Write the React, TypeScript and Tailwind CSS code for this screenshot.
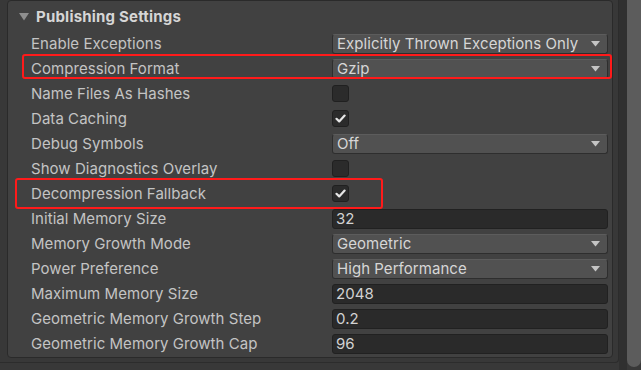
import React from "react";

type Row =
  | { label: string; kind: "dropdown"; value: string }
  | { label: string; kind: "check"; checked: boolean }
  | { label: string; kind: "text"; value: string };

const rows: Row[] = [
  { label: "Enable Exceptions", kind: "dropdown", value: "Explicitly Thrown Exceptions Only" },
  { label: "Compression Format", kind: "dropdown", value: "Gzip" },
  { label: "Name Files As Hashes", kind: "check", checked: false },
  { label: "Data Caching", kind: "check", checked: true },
  { label: "Debug Symbols", kind: "dropdown", value: "Off" },
  { label: "Show Diagnostics Overlay", kind: "check", checked: false },
  { label: "Decompression Fallback", kind: "check", checked: true },
  { label: "Initial Memory Size", kind: "text", value: "32" },
  { label: "Memory Growth Mode", kind: "dropdown", value: "Geometric" },
  { label: "Power Preference", kind: "dropdown", value: "High Performance" },
  { label: "Maximum Memory Size", kind: "text", value: "2048" },
  { label: "Geometric Memory Growth Step", kind: "text", value: "0.2" },
  { label: "Geometric Memory Growth Cap", kind: "text", value: "96" },
];

function Arrow() {
  return (
    <svg width="9" height="6" viewBox="0 0 9 6" className="shrink-0">
      <path d="M0 0 L9 0 L4.5 5.5 Z" fill="#c4c4c4" />
    </svg>
  );
}

function Field({ row }: { row: Row }) {
  if (row.kind === "dropdown") {
    return (
      <div className="w-[276px] h-[20px] rounded-[3px] bg-[#515151] border border-[#2e2e2e] border-t-[#5c5c5c] flex items-center pl-[4px] pr-[7px] justify-between">
        <span className="text-[#d6d6d6] text-[15px] tracking-[0.05px] leading-[18px] whitespace-nowrap">{row.value}</span>
        <Arrow />
      </div>
    );
  }
  if (row.kind === "text") {
    return (
      <div className="w-[276px] h-[20px] rounded-[3px] bg-[#2a2a2a] border border-[#212121] flex items-center pl-[3px]">
        <span className="text-[#d2d2d2] text-[15px] tracking-[0.05px] leading-[18px]">{row.value}</span>
      </div>
    );
  }
  return (
    <div className="w-[17px] h-[17px] rounded-[3px] bg-[#2b2b2b] border border-[#202020] flex items-center justify-center">
      {row.checked && (
        <svg width="11" height="9" viewBox="0 0 11 9">
          <path d="M1.5 4.8 L4.2 7.4 L9.6 1.6" fill="none" stroke="#e6e6e6" strokeWidth="2.2" strokeLinecap="round" strokeLinejoin="round" />
        </svg>
      )}
    </div>
  );
}

export default function App() {
  return (
    <div
      className="relative w-[641px] h-[370px] bg-[#383838] flex overflow-hidden"
      style={{ fontFamily: "Inter, 'Noto Sans', sans-serif" }}
    >
      <div className="w-[619px] h-[363px] border-r border-b border-[#2c2c2c] rounded-br-[4px] pl-[7px] pr-[6px]">
        <div className="w-[606px] h-[358px] bg-[#414141] border border-[#2a2a2a] rounded-[4px] flex flex-col">
          <div className="h-[30px] flex items-center pl-[11px] pt-[2px]">
            <svg width="10" height="8" viewBox="0 0 10 8" className="mr-[7px]">
              <path d="M0 0 L10 0 L5 7.5 Z" fill="#8e8e8e" />
            </svg>
            <span className="text-[#d6d6d6] text-[15px] tracking-[0.2px] font-bold leading-[18px]">Publishing Settings</span>
          </div>
          {rows.map((r) => (
            <div key={r.label} className="h-[25px] flex items-center pl-[23px]">
              <span className="w-[301px] shrink-0 text-[#c4c4c4] text-[15px] tracking-[0.05px] leading-[18px] whitespace-nowrap">{r.label}</span>
              <Field row={r} />
            </div>
          ))}
        </div>
      </div>
      <div className="w-[8px] h-full bg-[#303030]" />
      <div className="w-[14px] h-[367px] bg-[#5c5c5c] rounded-b-[7px]" />

      <div className="absolute left-[22px] top-[54px] w-[590px] h-[25px] border-2 border-[#ff1a1a] rounded-[3px]" />
      <div className="absolute left-[15px] top-[178px] w-[368px] h-[31px] border-2 border-[#ff1a1a] rounded-[3px]" />
    </div>
  );
}
